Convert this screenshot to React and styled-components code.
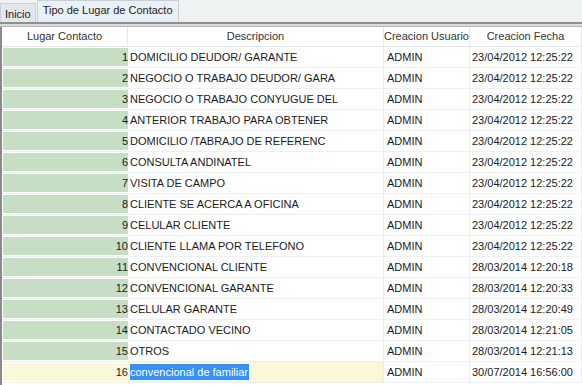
import React from 'react'
import styled, { createGlobalStyle } from 'styled-components'

const rows = [
  [1, 'DOMICILIO DEUDOR/ GARANTE', 'ADMIN', '23/04/2012 12:25:22'],
  [2, 'NEGOCIO O TRABAJO DEUDOR/ GARA', 'ADMIN', '23/04/2012 12:25:22'],
  [3, 'NEGOCIO O TRABAJO CONYUGUE DEL', 'ADMIN', '23/04/2012 12:25:22'],
  [4, 'ANTERIOR TRABAJO PARA OBTENER', 'ADMIN', '23/04/2012 12:25:22'],
  [5, 'DOMICILIO /TABRAJO DE REFERENC', 'ADMIN', '23/04/2012 12:25:22'],
  [6, 'CONSULTA ANDINATEL', 'ADMIN', '23/04/2012 12:25:22'],
  [7, 'VISITA DE CAMPO', 'ADMIN', '23/04/2012 12:25:22'],
  [8, 'CLIENTE SE ACERCA A OFICINA', 'ADMIN', '23/04/2012 12:25:22'],
  [9, 'CELULAR CLIENTE', 'ADMIN', '23/04/2012 12:25:22'],
  [10, 'CLIENTE LLAMA POR TELEFONO', 'ADMIN', '23/04/2012 12:25:22'],
  [11, 'CONVENCIONAL CLIENTE', 'ADMIN', '28/03/2014 12:20:18'],
  [12, 'CONVENCIONAL GARANTE', 'ADMIN', '28/03/2014 12:20:33'],
  [13, 'CELULAR GARANTE', 'ADMIN', '28/03/2014 12:20:49'],
  [14, 'CONTACTADO VECINO', 'ADMIN', '28/03/2014 12:21:05'],
  [15, 'OTROS', 'ADMIN', '28/03/2014 12:21:13'],
  [16, 'convencional de familiar', 'ADMIN', '30/07/2014 16:56:00'],
]

const Global = createGlobalStyle`
  body {
    margin: 0;
    font-family: "Liberation Sans", Arial, sans-serif;
    font-size: 11px;
    color: #1a1a1a;
    background: #fff;
  }
`

function App() {
  return (
    <Page>
      <Global />
      <TabBar>
        <Tab>Inicio</Tab>
        <Tab active>Tipo de Lugar de Contacto</Tab>
      </TabBar>
      <Divider />
      <Grid>
        <HeadRow>
          <HeadCell>Lugar Contacto</HeadCell>
          <HeadCell>Descripcion</HeadCell>
          <HeadCell>Creacion Usuario</HeadCell>
          <HeadCell>Creacion Fecha</HeadCell>
        </HeadRow>
        {rows.map(([id, desc, user, date]) => {
          const editing = id === 16
          return (
            <Row key={id}>
              <IdCell editing={editing}>{id}</IdCell>
              <Cell editing={editing}>
                {editing ? <Selected>{desc}</Selected> : desc}
              </Cell>
              <Cell pad={3}>{user}</Cell>
              <Cell pad={2}>{date}</Cell>
            </Row>
          )
        })}
      </Grid>
    </Page>
  )
}

export default App

const Page = styled.div`
  width: 582px;
  height: 385px;
  overflow: hidden;
  background: #fff;
`
const TabBar = styled.div`
  display: flex;
  align-items: flex-end;
  height: 22px;
  background: #eef2f2;
`
const Tab = styled.div`
  height: ${p => (p.active ? '22px' : '19px')};
  line-height: ${p => (p.active ? '18px' : '20px')};
  padding: 0 ${p => (p.active ? '5px' : '4px')};
  box-sizing: border-box;
  border: 1px solid #c9d0d6;
  border-bottom: none;
  background: ${p => (p.active ? '#eaf0f5' : '#e2e7ec')};
  color: #222;
  margin-left: ${p => (p.active ? '1px' : '0')};
`
const Divider = styled.div`
  height: 5px;
  box-sizing: border-box;
  border-top: 2px solid #8f8f8f;
  border-bottom: 1px solid #b5b5b5;
  background: #dcdcdc;
`
const Grid = styled.div`
  border-left: 2px solid #8a8a8a;
  min-height: 360px;
`
const cols = `126px 256px 86px 1fr`
const HeadRow = styled.div`
  display: grid;
  grid-template-columns: ${cols};
  height: 19px;
  border-bottom: 1px solid #e3e8ec;
`
const HeadCell = styled.div`
  text-align: center;
  line-height: 19px;
  color: #333;
  white-space: nowrap;
  border-right: 1px solid #e6eaee;
`
const Row = styled.div`
  display: grid;
  grid-template-columns: ${cols};
  height: 21px;
  border-bottom: 1px solid #eef1f4;
  box-sizing: border-box;
`
const Cell = styled.div`
  line-height: 20px;
  padding-left: ${p => p.pad || 2}px;
  white-space: nowrap;
  overflow: hidden;
  border-right: 1px solid #eaeef2;
  background: ${p => (p.editing ? '#fbf8d9' : 'transparent')};
`
const IdCell = styled.div`
  text-align: right;
  line-height: 18px;
  margin: 1px 0 1px 1px;
  background: ${p => (p.editing ? '#fbf8d9' : '#c5dec4')};
`
const Selected = styled.span`
  background: #3390ff;
  color: #fff;
  padding: 2px 1px 2px 0;
`
